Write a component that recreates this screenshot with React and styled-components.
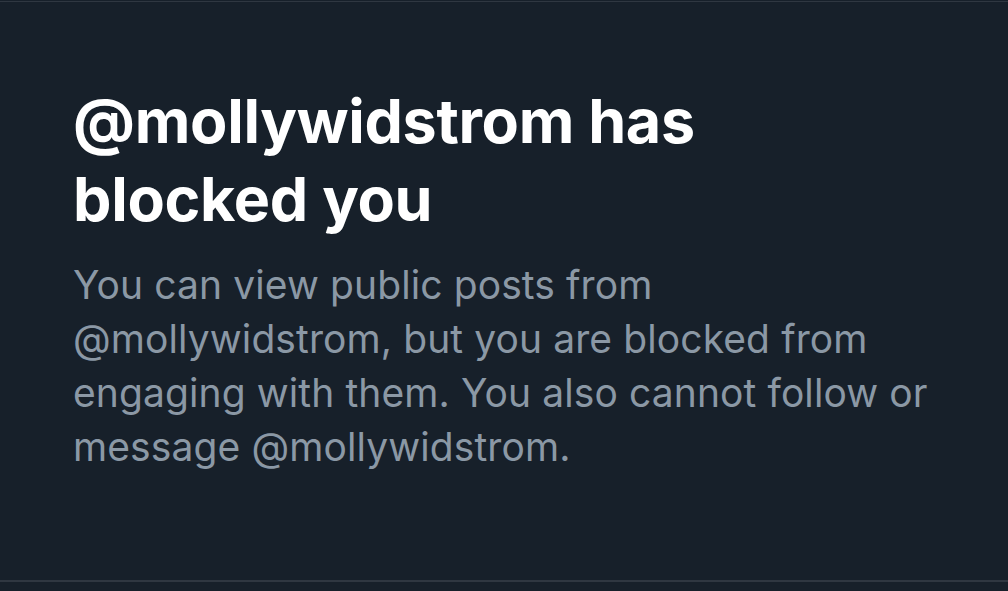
import React from "react";
import styled, { createGlobalStyle } from "styled-components";

const Global = createGlobalStyle`
  html, body { margin: 0; padding: 0; background: #17202a; }
  body { font-family: Inter, "Noto Sans", sans-serif; }
`;

const Screen = styled.div`
  width: 1008px;
  height: 591px;
  background: #17202a;
  display: flex;
  flex-direction: column;
`;

const Rule = styled.div`
  height: ${(p) => p.$thick}px;
  background: #2f3741;
  margin: ${(p) => p.$margin};
`;

const Body = styled.div`
  flex: 1;
  padding: 80px 60px 0 73px;
`;

const Heading = styled.h1`
  margin: 0;
  color: #ffffff;
  font-size: 61px;
  font-weight: 700;
  line-height: 78px;
  letter-spacing: -0.3px;
  max-width: 660px;
`;

const Message = styled.p`
  margin: 20px 0 0;
  color: #8b98a5;
  font-size: 39px;
  font-weight: 400;
  line-height: 54px;
  letter-spacing: 0.1px;
`;

export default function App() {
  return (
    <>
      <Global />
      <Screen>
        <Rule $thick={1} $margin="1px 0 0" />
        <Body>
          <Heading>@mollywidstrom has blocked you</Heading>
          <Message>
            You can view public posts from @mollywidstrom, but you are blocked
            from engaging with them. You also cannot follow or message
            @mollywidstrom.
          </Message>
        </Body>
        <Rule $thick={2} $margin="0 0 9px" />
      </Screen>
    </>
  );
}
